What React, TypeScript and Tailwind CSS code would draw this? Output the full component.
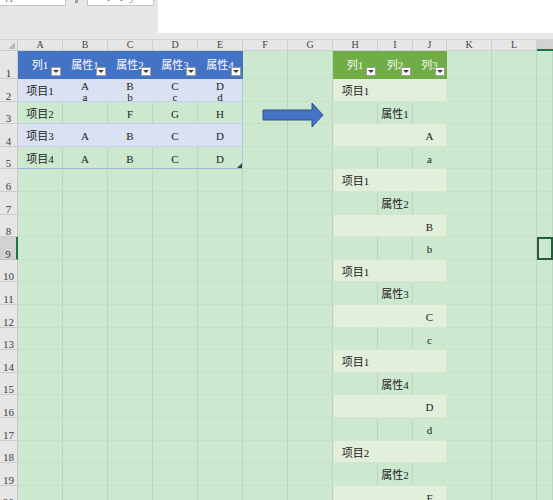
import React from 'react';

const COLS = ['A', 'B', 'C', 'D', 'E', 'F', 'G', 'H', 'I', 'J', 'K', 'L', ''];
const ROWS = Array.from({ length: 20 }, (_, i) => i + 1);

const blueHeader = ['列1', '属性1', '属性2', '属性3', '属性4'];
const blueBody: string[][] = [
  ['项目1', 'A\na', 'B\nb', 'C\nc', 'D\nd'],
  ['项目2', '', 'F', 'G', 'H'],
  ['项目3', 'A', 'B', 'C', 'D'],
  ['项目4', 'A', 'B', 'C', 'D'],
];
const greenHeader = ['列1', '列2', '列3'];
const greenBody: [string, number][] = [
  ['项目1', 0], ['属性1', 1], ['A', 2], ['a', 2],
  ['项目1', 0], ['属性2', 1], ['B', 2], ['b', 2],
  ['项目1', 0], ['属性3', 1], ['C', 2], ['c', 2],
  ['项目1', 0], ['属性4', 1], ['D', 2], ['d', 2],
  ['项目2', 0], ['属性2', 1], ['F', 2],
];

const BASE =
  'flex items-center justify-center text-center whitespace-pre overflow-hidden border-r border-b text-[11px] leading-[11px] text-[#222]';

function Dropdown() {
  return (
    <span className="absolute right-[1px] bottom-[2px] w-[10px] h-[9px] bg-white border border-[#9c9c9c] flex items-center justify-center">
      <span className="w-0 h-0 border-l-[3px] border-r-[3px] border-t-[3px] border-l-transparent border-r-transparent border-t-[#3c3c3c]" />
    </span>
  );
}

function Cell({ r, c }: { r: number; c: number }) {
  // Blue table A1:E5
  if (c <= 4 && r <= 5) {
    if (r === 1) {
      return (
        <div className={`${BASE} relative bg-[#4472c4] border-[#4472c4]`}>
          <span className="text-white pt-[2px]">{blueHeader[c]}</span>
          <Dropdown />
        </div>
      );
    }
    const text = blueBody[r - 2][c];
    const filled = r % 2 === 0;
    const bottom = r === 5 ? 'border-b-[#9fb3d9]' : 'border-b-[#c3d1ec]';
    const right =
      c === 4 ? 'border-r-[#b4c6e7]' : filled ? 'border-r-[#d9e1f2]' : 'border-r-[#bad8bd]';
    return (
      <div className={`${BASE} relative ${filled ? 'bg-[#d9e1f2]' : ''} ${right} ${bottom}`}>
        <span className="pt-[3px]">{text}</span>
        {r === 5 && c === 4 && (
          <svg className="absolute right-0 bottom-0" width="5" height="5" viewBox="0 0 5 5">
            <polygon points="5,0 5,5 0,5" fill="#404040" />
          </svg>
        )}
      </div>
    );
  }
  // Green table H1:J20
  if (c >= 7 && c <= 9) {
    if (r === 1) {
      return (
        <div className={`${BASE} relative bg-[#70ad47] border-[#70ad47]`}>
          <span className="text-[#f4faef] pt-[2px]">{greenHeader[c - 7]}</span>
          <Dropdown />
        </div>
      );
    }
    const [text, col] = greenBody[r - 2];
    const filled = r % 2 === 0;
    const right =
      c === 9 ? 'border-r-[#d6e9cb]' : filled ? 'border-r-[#e2efda]' : 'border-r-[#bad8bd]';
    return (
      <div
        className={`${BASE} ${filled ? 'bg-[#e2efda]' : ''} ${right} border-b-[#d4e8c8] ${
          c === 7 ? 'border-l border-l-[#d6e9cb]' : ''
        }`}
      >
        <span className="pt-[3px]">{col === c - 7 ? text : ''}</span>
      </div>
    );
  }
  if (c === 12 && r === 9) {
    return <div className="border-2 border-[#235c37]" />;
  }
  return <div className="border-r border-b border-r-[#bad8bd] border-b-[#c4e0c6]" />;
}

export default function App() {
  return (
    <div className="w-[553px] h-[500px] overflow-hidden bg-[#e7e7e7] relative font-['Liberation_Serif','Noto_Sans_CJK_SC',serif]">
      {/* formula bar area */}
      <div className="flex h-[33px]">
        <div className="w-[158px] flex items-start">
          <div className="w-[66px] h-[6px] bg-white border-b border-r border-[#c6c6c6] overflow-hidden pl-[4px]">
            <div className="mt-[-8px] text-[11px] leading-[11px] text-[#666]">称</div>
          </div>
          <div className="w-[21px] flex justify-center">
            <div className="w-[3px] h-[3px] bg-[#a0a0a0]" />
          </div>
          <div className="w-[67px] h-[6px] bg-white border-b border-l border-r border-[#c6c6c6] overflow-hidden pl-[6px]">
            <div className="mt-[-8px] text-[11px] leading-[11px] text-[#777] tracking-[6px]">×✓fy</div>
          </div>
        </div>
        <div className="flex-1 bg-white" />
      </div>
      <div className="h-[7px] border-b border-[#d3d3d3]" />

      {/* sheet */}
      <div className="grid grid-cols-[18px_repeat(8,45px)_35px_34px_45px_45px_1fr] grid-rows-[11px_28px_23px_22px_23px_22px_23px_23px_22px_23px_22px_23px_23px_22px_23px_22px_23px_23px_22px_23px_22px] bg-[#cce8cf]">
        {/* column header row */}
        <div className="relative bg-[#e6e6e6] border-r border-b border-[#cacaca]">
          <svg className="absolute right-[2px] bottom-[1px]" width="7" height="7" viewBox="0 0 7 7">
            <polygon points="7,0 7,7 0,7" fill="#b8b8b8" />
          </svg>
        </div>
        {COLS.map((l, i) =>
          i === 12 ? (
            <div key={l + i} className="bg-[#d2d2d2] border-b-2 border-[#217346]" />
          ) : (
            <div
              key={l + i}
              className="bg-[#e6e6e6] border-r border-b border-[#cfcfcf] flex items-center justify-center text-[10px] leading-none text-[#444]"
            >
              {l}
            </div>
          )
        )}
        {ROWS.map((r) => (
          <React.Fragment key={r}>
            <div
              className={
                r === 9
                  ? 'bg-[#d2d2d2] border-r-2 border-b border-r-[#217346] border-b-[#c4c4c4] flex items-end justify-center text-[11px] leading-[10px] text-[#3c3c3c]'
                  : 'bg-[#e6e6e6] border-r border-b border-r-[#cacaca] border-b-[#cacaca] flex items-end justify-center text-[11px] leading-[10px] text-[#3c3c3c]'
              }
            >
              {r}
            </div>
            {COLS.map((_, c) => (
              <Cell key={c} r={r} c={c} />
            ))}
          </React.Fragment>
        ))}
      </div>

      {/* arrow shape */}
      <svg className="absolute left-[262px] top-[102px]" width="62" height="26" viewBox="0 0 62 26">
        <polygon
          points="1,8 50,8 50,1 61,13 50,25 50,18 1,18"
          fill="#4472c4"
          stroke="#2f528f"
          strokeWidth="1"
        />
      </svg>
    </div>
  );
}
